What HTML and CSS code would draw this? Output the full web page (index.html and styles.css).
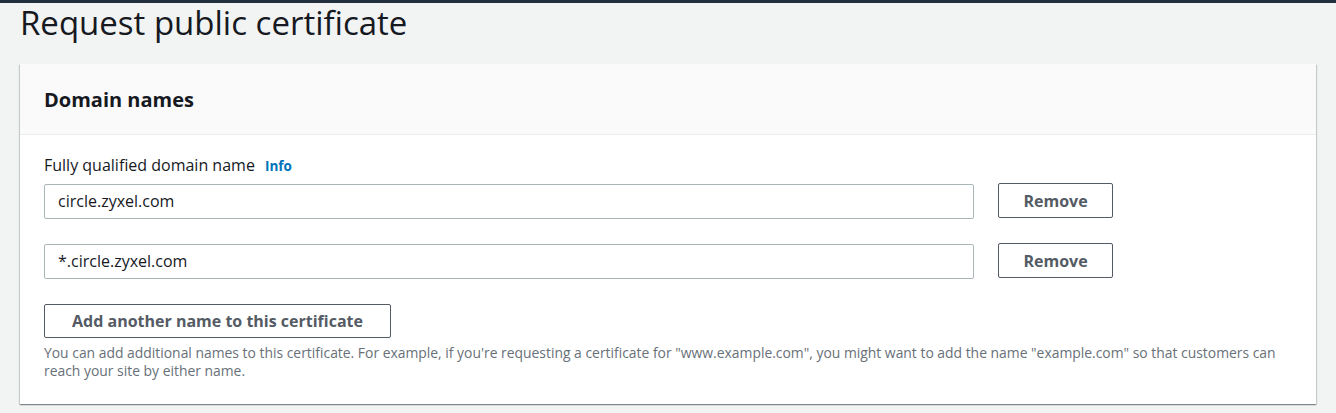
FILE: index.html
```html
<!DOCTYPE html>
<html>
<head>
<meta charset="utf-8">
<link rel="stylesheet" href="styles.css">
</head>
<body>
<div class="topbar"></div>
<main class="page">
  <h1 class="title">Request public certificate</h1>
  <section class="card">
    <header class="card-head"><h2>Domain names</h2></header>
    <div class="card-body">
      <div class="label">Fully qualified domain name <a class="info">Info</a></div>
      <div class="row">
        <div class="input">circle.zyxel.com</div>
        <button class="btn remove">Remove</button>
      </div>
      <div class="row">
        <div class="input">*.circle.zyxel.com</div>
        <button class="btn remove">Remove</button>
      </div>
      <button class="btn add">Add another name to this certificate</button>
      <p class="help">You can add additional names to this certificate. For example, if you're requesting a certificate for "www.example.com", you might want to add the name "example.com" so that customers can reach your site by either name.</p>
    </div>
  </section>
</main>
</body>
</html>
```
FILE: styles.css
```css
* { box-sizing: border-box; }
html, body { margin: 0; padding: 0; }
body {
  background: #f2f3f3;
  font-family: "Open Sans", "Noto Sans", sans-serif;
  color: #16191f;
  width: 1336px;
  height: 413px;
  overflow: hidden;
}
.topbar { height: 3px; background: #232f3e; }
.page { padding: 0 20px; }
.title {
  margin: 0;
  font-weight: 400;
  font-size: 33px;
  line-height: 40px;
  height: 61px;
}
.card {
  background: #fff;
  box-shadow: 0 1px 1px 0 rgba(0,28,36,0.3), 1px 1px 1px 0 rgba(0,28,36,0.15), -1px 1px 1px 0 rgba(0,28,36,0.15);
  width: 1296px;
}
.card-head {
  background: #fafafa;
  border-bottom: 1px solid #eaeded;
  height: 71px;
  padding: 0 24px;
  display: flex;
  align-items: center;
}
.card-head h2 {
  margin: 0;
  font-size: 20px;
  font-weight: 700;
}
.card-body { padding: 18px 24px 24px; }
.label {
  font-size: 16px;
  line-height: 24px;
  margin-bottom: 6px;
}
.info {
  color: #0073bb;
  font-weight: 700;
  font-size: 13.5px;
  margin-left: 6px;
}
.row {
  display: flex;
  align-items: center;
  gap: 24px;
  margin-bottom: 25px;
}
.input {
  width: 930px;
  height: 35px;
  border: 1px solid #aab7b8;
  border-radius: 2px;
  padding: 0 13px;
  font-size: 16px;
  line-height: 33px;
}
.btn {
  font-family: "Open Sans", "Noto Sans", sans-serif;
  background: #fff;
  border: 1px solid #545b64;
  border-radius: 2px;
  color: #545b64;
  font-weight: 700;
  font-size: 16px;
  height: 35px;
  padding: 0 10px;
  cursor: pointer;
}
.remove { width: 115px; margin-top: -2px; }
.add { width: 347px; height: 34px; display: block; }
.help {
  margin: 6px 0 0;
  font-size: 13.9px;
  line-height: 18px;
  color: #687078;
  width: 1250px;
}
```
